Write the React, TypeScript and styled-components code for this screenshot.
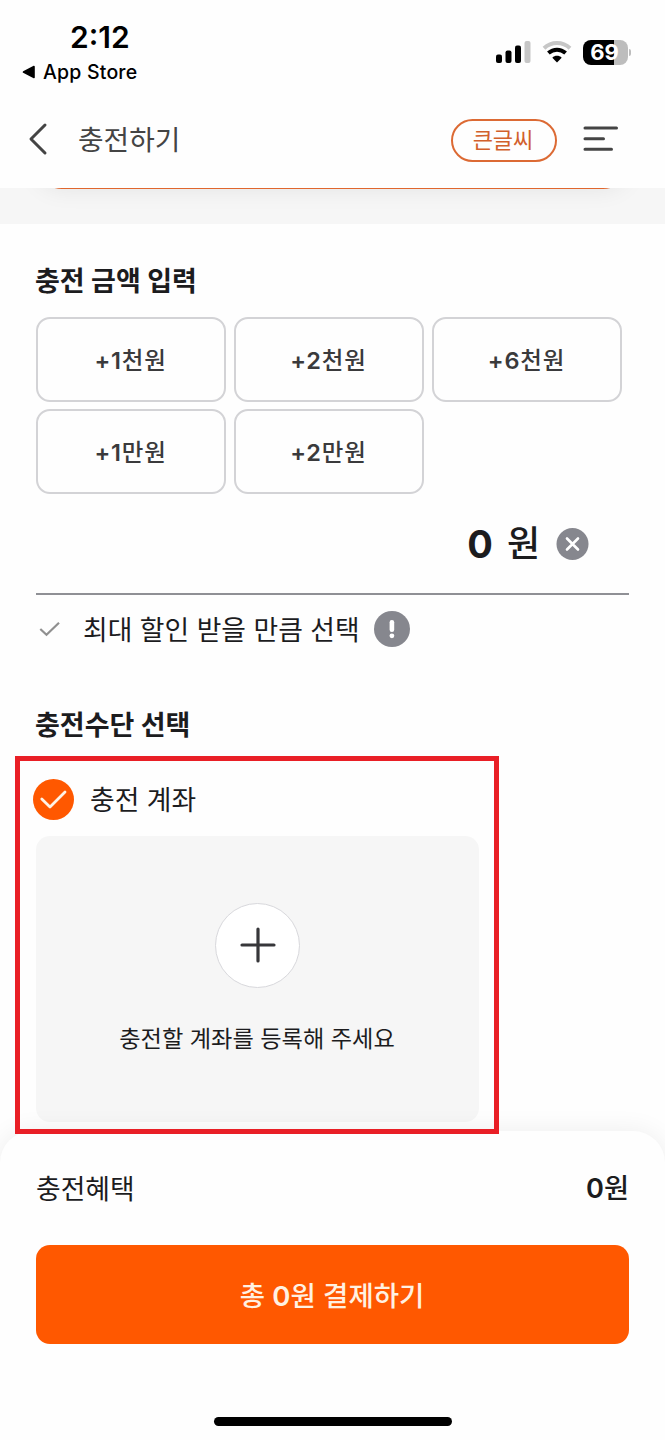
import React from 'react';
import styled, { createGlobalStyle } from 'styled-components';

const GlobalStyle = createGlobalStyle`
  *, *::before, *::after { box-sizing: border-box; }
  body {
    margin: 0;
    background: #fff;
    font-family: Inter, 'Noto Sans CJK KR', sans-serif;
    color: #1c1c1e;
  }
  button {
    font: inherit;
    color: inherit;
    padding: 0;
    margin: 0;
    background: none;
    border: 0;
  }
  svg { display: block; flex: none; }
`;

const Screen = styled.div`
  width: 665px;
  height: 1440px;
  display: flex;
  flex-direction: column;
  background: #fefefe;
  overflow: hidden;
`;

const StatusBar = styled.div`
  height: 94px;
  flex: none;
  display: flex;
  justify-content: space-between;
  align-items: flex-start;
  padding: 20px 34px 0 22px;
  color: #000;
`;

const StatusLeft = styled.div`
  display: flex;
  flex-direction: column;
`;

const Clock = styled.div`
  padding-left: 48px;
  font-size: 30px;
  font-weight: 600;
  line-height: 34px;
`;

const BackToApp = styled.div`
  display: flex;
  align-items: center;
  gap: 7px;
  margin-top: 5px;
  font-size: 19.5px;
  font-weight: 500;
  line-height: 26px;
  letter-spacing: 0.2px;
`;

const StatusIcons = styled.div`
  display: flex;
  align-items: center;
  gap: 11px;
  height: 26px;
  margin-top: 19px;
`;

const Battery = styled.div`
  display: flex;
  align-items: center;
  gap: 1px;
`;

const BatteryBody = styled.div`
  width: 45px;
  height: 25px;
  border-radius: 8px;
  background: linear-gradient(90deg, #000 69%, #bdbdbd 69%);
  color: #fff;
  font-size: 22px;
  font-weight: 700;
  line-height: 25px;
  text-align: center;
  padding-right: 2px;
`;

const BatteryTip = styled.div`
  width: 2px;
  height: 7px;
  border-radius: 0 3px 3px 0;
  background: #bdbdbd;
`;

const Header = styled.header`
  height: 94px;
  flex: none;
  display: flex;
  align-items: center;
  padding: 0 46px 4px 28px;
`;

const PageTitle = styled.h1`
  margin: 1px auto 0 30px;
  font-size: 27.8px;
  font-weight: 400;
  line-height: 40px;
  color: #444;
`;

const LargeTextButton = styled.button`
  width: 106px;
  height: 43px;
  margin: 3px 26px 0 0;
  padding: 0 2px 2px 0;
  border: 2px solid #dc6a34;
  border-radius: 22px;
  color: #d2602c;
  font-size: 22px;
  line-height: 36px;
`;

const CardStrip = styled.div`
  height: 36px;
  flex: none;
  background: #f6f6f6;
  overflow: hidden;
  padding: 0 36px;
`;

const CardEdge = styled.div`
  height: 80px;
  margin-top: -79px;
  border: 2px solid #e0672e;
  border-radius: 26px;
  background: #fff;
  box-shadow: 0 0 24px rgba(0, 0, 0, 0.08);
`;

const Main = styled.main`
  flex: 1;
  min-height: 0;
  padding: 38px 36px 0;
`;

const SectionTitle = styled.h2`
  margin: 0 0 0 -1px;
  font-size: 27px;
  font-weight: 700;
  line-height: 40px;
`;

const AmountGrid = styled.div`
  display: grid;
  grid-template-columns: repeat(3, 190px);
  grid-auto-rows: 85px;
  gap: 7px 8px;
  margin-top: 15px;
`;

const AmountButton = styled.button`
  padding: 0 1px 2px 0;
  border: 2px solid #d3d3d6;
  border-radius: 14px;
  font-size: 23.5px;
  font-weight: 500;
  letter-spacing: 0.8px;
  color: #3a3a3c;
`;

const AmountPrefix = styled.span`
  font-weight: 600;
`;

const AmountField = styled.div`
  display: flex;
  align-items: center;
  justify-content: flex-end;
  height: 101px;
  padding-right: 40px;
  border-bottom: 2px solid #8f9095;
`;

const AmountValue = styled.span`
  font-size: 38px;
  font-weight: 700;
  line-height: 48px;
`;

const AmountUnit = styled.span`
  margin: 0 16px 0 14px;
  font-size: 36px;
  font-weight: 500;
  line-height: 48px;
`;

const DiscountRow = styled.div`
  display: flex;
  align-items: center;
  height: 40px;
  margin: 14px 0 57px;
  padding-left: 3px;
`;

const OptionLabel = styled.span<{ $left: number; $right?: number }>`
  margin: 1px ${(p) => p.$right ?? 0}px 0 ${(p) => p.$left}px;
  font-size: 26.8px;
  line-height: 40px;
`;

const AccountSection = styled.section`
  position: relative;
  margin-top: 10px;
  padding-top: 22px;

  &::after {
    content: '';
    position: absolute;
    z-index: 2;
    left: -21px;
    top: 0;
    width: 484px;
    height: 378px;
    border: 5px solid #e91f26;
  }
`;

const AccountOption = styled.div`
  display: flex;
  align-items: center;
  height: 42px;
  margin-left: -3px;
`;

const AccountPanel = styled.div`
  display: flex;
  flex-direction: column;
  align-items: center;
  width: 443px;
  height: 286px;
  margin-top: 16px;
  padding-top: 67px;
  border-radius: 14px;
  background: #f6f6f6;
`;

const AddButton = styled.button`
  display: flex;
  align-items: center;
  justify-content: center;
  width: 85px;
  height: 85px;
  padding-bottom: 2px;
  border: 1px solid #d8d8dc;
  border-radius: 50%;
  background: #fff;
`;

const PanelHint = styled.p`
  margin: 31px 1px 0 0;
  font-size: 23.2px;
  line-height: 40px;
`;

const Sheet = styled.footer`
  position: relative;
  z-index: 1;
  height: 309px;
  flex: none;
  display: flex;
  flex-direction: column;
  padding: 38px 36px 0;
  border-radius: 32px 32px 0 0;
  background: #fefefe;
  box-shadow: 0 0 26px rgba(0, 0, 0, 0.07);
`;

const BenefitRow = styled.div`
  display: flex;
  justify-content: space-between;
  font-size: 26.8px;
  line-height: 40px;
`;

const BenefitValue = styled.span`
  font-size: 27.2px;
  font-weight: 500;
`;

const Digits = styled.span`
  font-weight: 600;
`;

const PayButton = styled.button`
  height: 99px;
  margin-top: 36px;
  padding: 0 1px 2px 0;
  border-radius: 14px;
  background: #ff5800;
  color: #fff1e2;
  font-size: 27.5px;
  font-weight: 500;
`;

const HomeIndicator = styled.div`
  align-self: center;
  width: 238px;
  height: 9px;
  margin-top: 73px;
  border-radius: 5px;
  background: #000;
`;

const SignalIcon = () => (
  <svg width="35" height="22" viewBox="0 0 35 22">
    <rect x="0" y="13.5" width="6" height="8.5" rx="2" />
    <rect x="9.5" y="9.5" width="6" height="12.5" rx="2" />
    <rect x="19" y="4.5" width="6" height="17.5" rx="2" />
    <rect x="28.5" y="0" width="6" height="22" rx="2" fill="#c6c6c6" />
  </svg>
);

const WifiIcon = () => (
  <svg width="30" height="22" viewBox="0 0 30 22" fill="none">
    <path d="M2 7.2C9.4 .3 20.6 .3 28 7.2" stroke="#c6c6c6" strokeWidth="4" />
    <path d="M6.4 12.1C11.5 7.6 18.5 7.6 23.6 12.1" stroke="#000" strokeWidth="4" />
    <path d="M10.3 16.7C12.8 14.1 17.2 14.1 19.7 16.7L15 21.6Z" fill="#000" />
  </svg>
);

const BackIcon = () => (
  <svg width="20" height="34" viewBox="0 0 20 34" fill="none">
    <path d="M17 3L3 17L17 31" stroke="#444" strokeWidth="3" strokeLinecap="round" strokeLinejoin="round" />
  </svg>
);

const MenuIcon = () => (
  <svg width="36" height="26" viewBox="0 0 36 26" fill="none" stroke="#444" strokeWidth="3" strokeLinecap="round">
    <path d="M2 2H33.5M2 12.7H20.5M2 23.3H28.5" />
  </svg>
);

const ClearIcon = () => (
  <svg width="33" height="33" viewBox="0 0 33 33" fill="none">
    <circle cx="16.5" cy="17" r="16" fill="#86878e" />
    <path d="M11 11.5L22 22.5M22 11.5L11 22.5" stroke="#fff" strokeWidth="2.6" strokeLinecap="round" />
  </svg>
);

const ThinCheckIcon = () => (
  <svg width="22" height="16" viewBox="0 0 22 16" fill="none">
    <path d="M1.3 8L7.5 13.8L20 1.8" stroke="#909090" strokeWidth="2.2" />
  </svg>
);

const InfoIcon = () => (
  <svg width="36" height="36" viewBox="0 0 36 36">
    <circle cx="18" cy="18" r="18" fill="#86878e" />
    <rect x="15.6" y="9" width="4.6" height="12" rx="2.2" fill="#fff" />
    <circle cx="17.9" cy="24.8" r="2.4" fill="#fff" />
  </svg>
);

const RadioCheckIcon = () => (
  <svg width="41" height="41" viewBox="0 0 41 41" fill="none">
    <circle cx="20.5" cy="20.5" r="20.5" fill="#ff5800" />
    <path d="M8.8 20L17 28L32 13" stroke="#fff3e6" strokeWidth="2.8" strokeLinecap="round" strokeLinejoin="round" />
  </svg>
);

const PlusIcon = () => (
  <svg width="36" height="36" viewBox="0 0 36 36" fill="none">
    <path d="M18 2V34M2 18H34" stroke="#37373a" strokeWidth="3.2" strokeLinecap="round" />
  </svg>
);

const AMOUNTS = [
  ['+1', '천원'],
  ['+2', '천원'],
  ['+6', '천원'],
  ['+1', '만원'],
  ['+2', '만원'],
];

export default function App() {
  return (
    <>
      <GlobalStyle />
      <Screen>
        <StatusBar>
          <StatusLeft>
            <Clock>2:12</Clock>
            <BackToApp>
              <svg width="14" height="14" viewBox="0 0 14 14">
                <path d="M1.5 7L12 1.5V12.5Z" stroke="#000" strokeWidth="1.6" strokeLinejoin="round" />
              </svg>
              App Store
            </BackToApp>
          </StatusLeft>
          <StatusIcons>
            <SignalIcon />
            <WifiIcon />
            <Battery>
              <BatteryBody>69</BatteryBody>
              <BatteryTip />
            </Battery>
          </StatusIcons>
        </StatusBar>
        <Header>
          <BackIcon />
          <PageTitle>충전하기</PageTitle>
          <LargeTextButton>큰글씨</LargeTextButton>
          <MenuIcon />
        </Header>
        <CardStrip>
          <CardEdge />
        </CardStrip>
        <Main>
          <SectionTitle>충전 금액 입력</SectionTitle>
          <AmountGrid>
            {AMOUNTS.map(([prefix, unit]) => (
              <AmountButton key={prefix + unit}>
                <AmountPrefix>{prefix}</AmountPrefix>
                {unit}
              </AmountButton>
            ))}
          </AmountGrid>
          <AmountField>
            <AmountValue>0</AmountValue>
            <AmountUnit>원</AmountUnit>
            <ClearIcon />
          </AmountField>
          <DiscountRow>
            <ThinCheckIcon />
            <OptionLabel $left={22} $right={14}>최대 할인 받을 만큼 선택</OptionLabel>
            <InfoIcon />
          </DiscountRow>
          <SectionTitle>충전수단 선택</SectionTitle>
          <AccountSection>
            <AccountOption>
              <RadioCheckIcon />
              <OptionLabel $left={16}>충전 계좌</OptionLabel>
            </AccountOption>
            <AccountPanel>
              <AddButton aria-label="계좌 등록">
                <PlusIcon />
              </AddButton>
              <PanelHint>충전할 계좌를 등록해 주세요</PanelHint>
            </AccountPanel>
          </AccountSection>
        </Main>
        <Sheet>
          <BenefitRow>
            <span>충전혜택</span>
            <BenefitValue>
              <Digits>0</Digits>원
            </BenefitValue>
          </BenefitRow>
          <PayButton>
            총 <Digits>0</Digits>원 결제하기
          </PayButton>
          <HomeIndicator />
        </Sheet>
      </Screen>
    </>
  );
}
